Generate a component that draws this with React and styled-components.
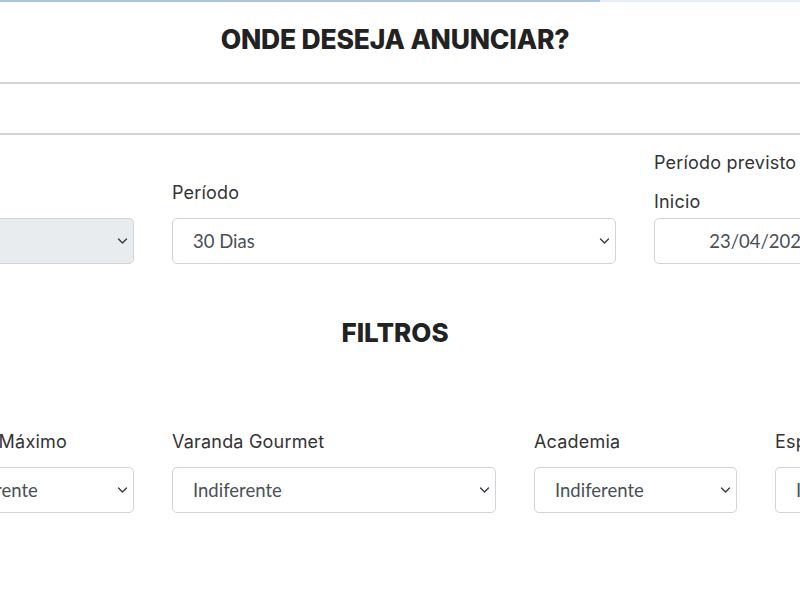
import styled, { createGlobalStyle } from 'styled-components';

const GlobalStyle = createGlobalStyle`
  html, body {
    margin: 0;
    padding: 0;
    background: #fff;
    overflow: hidden;
  }
  body {
    font-family: "Inter", "Open Sans", sans-serif;
    color: #333;
  }
`;

const Page = styled.div`
  width: 800px;
  height: 600px;
  overflow: hidden;
`;

const Progress = styled.div`
  height: 2px;
  background: #e6edf6;
  display: flex;
`;

const ProgressFill = styled.div`
  width: 600px;
  background: #a9c3e6;
`;

const Header = styled.div`
  height: 82px;
  box-sizing: border-box;
  padding: 0 10px 6px 0;
  display: flex;
  align-items: center;
  justify-content: center;
  border-bottom: 2px solid #d4d4d4;
`;

const Title = styled.h1`
  margin: 0;
  font-family: "Inter", sans-serif;
  font-weight: 800;
  font-size: 26.5px;
  letter-spacing: -0.2px;
  color: #222;
`;

const Spacer = styled.div`
  height: 49px;
  border-bottom: 2px solid #d4d4d4;
`;

const Row = styled.div`
  display: flex;
  align-items: flex-end;
  gap: 38px;
  margin-left: ${(p) => p.$shift}px;
  margin-top: ${(p) => p.$top || 0}px;
`;

const Field = styled.div`
  flex: 0 0 ${(p) => p.$width}px;
  display: flex;
  flex-direction: column;
`;

const Label = styled.label`
  font-family: "Inter", sans-serif;
  font-size: 18px;
  letter-spacing: 0.2px;
  line-height: 24px;
  color: #333;
  margin-bottom: ${(p) => p.$gap ?? 13}px;
  white-space: nowrap;
`;

const SelectBox = styled.div`
  height: 46px;
  box-sizing: border-box;
  border: 1px solid #ced4da;
  border-radius: 5px;
  background: ${(p) => (p.$disabled ? '#e9ecef' : '#fff')};
  display: flex;
  align-items: center;
  justify-content: ${(p) => (p.$center ? 'center' : 'space-between')};
  padding: 0 5px 0 20px;
  font-family: "Lato", "Open Sans", sans-serif;
  font-size: 18.5px;
  color: #495057;
  white-space: nowrap;
`;

const Section = styled.h2`
  margin: 24px 10px 0 0;
  text-align: center;
  font-family: "Inter", sans-serif;
  font-weight: 800;
  font-size: 26px;
  color: #222;
  height: 90px;
  line-height: 90px;
`;

const Chevron = () => (
  <svg width="11" height="8" viewBox="0 0 16 12" fill="none">
    <path d="M2 3l6 6 6-6" stroke="#343a40" strokeWidth="2" strokeLinecap="round" strokeLinejoin="round" />
  </svg>
);

const Select = ({ value, disabled }) => (
  <SelectBox $disabled={disabled}>
    <span>{value}</span>
    <Chevron />
  </SelectBox>
);

export default function App() {
  return (
    <Page>
      <GlobalStyle />
      <Progress>
        <ProgressFill />
      </Progress>
      <Header>
        <Title>ONDE DESEJA ANUNCIAR?</Title>
      </Header>
      <Spacer />
      <Row $shift={-100} $top={16}>
        <Field $width={234}>
          <Select value="" disabled />
        </Field>
        <Field $width={444}>
          <Label>Período</Label>
          <Select value="30 Dias" />
        </Field>
        <Field $width={198}>
          <Label $gap={15}>Período previsto</Label>
          <Label $gap={4}>Inicio</Label>
          <SelectBox $center>23/04/2023</SelectBox>
        </Field>
      </Row>
      <Section>FILTROS</Section>
      <Row $shift={-72} $top={52}>
        <Field $width={206}>
          <Label>Aluguel Máximo</Label>
          <Select value="Indiferente" />
        </Field>
        <Field $width={324}>
          <Label>Varanda Gourmet</Label>
          <Select value="Indiferente" />
        </Field>
        <Field $width={203}>
          <Label>Academia</Label>
          <Select value="Indiferente" />
        </Field>
        <Field $width={203}>
          <Label>Espaço Gourmet</Label>
          <Select value="Indiferente" />
        </Field>
      </Row>
    </Page>
  );
}
